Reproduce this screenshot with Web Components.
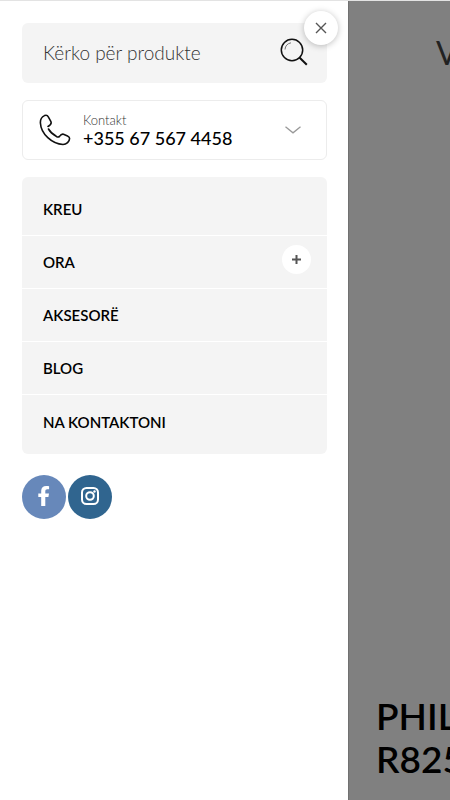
<!DOCTYPE html>
<html lang="sq">
<head>
<meta charset="utf-8">
<meta name="viewport" content="width=device-width, initial-scale=1">
<title>Menu</title>
<style>
  body {
    margin: 0;
    font-family: Lato, "Liberation Sans", sans-serif;
    color: #000;
  }
</style>
</head>
<body>
<shop-page>
  <side-drawer slot="drawer">
    <search-box placeholder="Kërko për produkte"></search-box>
    <contact-card label="Kontakt">+355 67 567 4458</contact-card>
    <nav-menu>
      <nav-item href="#kreu">KREU</nav-item>
      <nav-item href="#ora" expandable>ORA</nav-item>
      <nav-item href="#aksesore">AKSESORË</nav-item>
      <nav-item href="#blog">BLOG</nav-item>
      <nav-item href="#kontakt">NA KONTAKTONI</nav-item>
    </nav-menu>
    <social-links></social-links>
  </side-drawer>
  <product-hero>
    <span slot="brand">V</span>
    <span slot="title">PHIL<br>R825</span>
  </product-hero>
</shop-page>

<script>
class BaseElement extends HTMLElement {
  constructor() {
    super();
    this.attachShadow({ mode: "open" });
  }

  connectedCallback() {
    this.shadowRoot.innerHTML = this.template();
  }
}

class ShopPage extends BaseElement {
  template() {
    return `
      <style>
        :host {
          display: flex;
          box-sizing: border-box;
          min-height: 100vh;
          border-top: 1px solid #e3e3e3;
          overflow: hidden;
        }
      </style>
      <slot name="drawer"></slot>
      <slot></slot>`;
  }
}

class SideDrawer extends BaseElement {
  template() {
    return `
      <style>
        :host {
          display: block;
          position: relative;
          box-sizing: border-box;
          flex: none;
          width: min(348px, 85vw);
          padding: 22px 21px 22px 22px;
          background: #fff;
        }
        .content {
          display: flex;
          flex-direction: column;
          gap: 17px;
        }
        .close {
          position: absolute;
          top: 10px;
          right: 10px;
          display: grid;
          place-items: center;
          width: 34px;
          height: 34px;
          padding: 0;
          border: 0;
          border-radius: 50%;
          background: #fff;
          box-shadow: 0 1px 6px rgba(0, 0, 0, 0.25);
          cursor: pointer;
        }
      </style>
      <div class="content"><slot></slot></div>
      <button class="close" type="button" aria-label="Mbyll">
        <svg width="12" height="12" viewBox="0 0 12 12" fill="none" stroke="#555" stroke-width="1.4">
          <path d="M1 1l10 10M11 1L1 11"/>
        </svg>
      </button>`;
  }
}

class SearchBox extends BaseElement {
  template() {
    const placeholder = this.getAttribute("placeholder");
    return `
      <style>
        :host {
          display: block;
        }
        form {
          display: flex;
          align-items: center;
          height: 60px;
          padding: 0 19px 2px 21px;
          box-sizing: border-box;
          border-radius: 6px;
          background: #f4f4f4;
        }
        input {
          flex: 1;
          min-width: 0;
          padding: 2px 0 0;
          border: 0;
          outline: 0;
          background: none;
          font: 300 19px/24px Lato, sans-serif;
          color: #000;
        }
        input::placeholder {
          color: #333;
          opacity: 1;
        }
        button {
          display: flex;
          padding: 0;
          border: 0;
          background: none;
          cursor: pointer;
        }
      </style>
      <form>
        <input type="search" placeholder="${placeholder}" aria-label="${placeholder}">
        <button type="button" aria-label="Kërko">
          <svg width="28" height="28" viewBox="0 0 28 28" fill="none" stroke="#111">
            <circle cx="12" cy="12" r="10.7" stroke-width="1.5"/>
            <path d="M5 11.5A7.5 7.5 0 0 1 11 4.8" stroke="#777"/>
            <path d="M19.2 19.2l7.6 7.6" stroke-width="2"/>
          </svg>
        </button>
      </form>`;
  }
}

class ContactCard extends BaseElement {
  template() {
    return `
      <style>
        :host {
          display: block;
        }
        button {
          display: flex;
          align-items: center;
          gap: 12px;
          box-sizing: border-box;
          width: 100%;
          height: 60px;
          padding: 0 25px 0 16px;
          border: 1px solid #ececec;
          border-radius: 6px;
          background: #fff;
          font-family: inherit;
          color: #000;
          text-align: left;
          cursor: pointer;
        }
        .text {
          flex: 1;
        }
        .label, .number {
          display: block;
        }
        .label {
          font-size: 13px;
          font-weight: 300;
          line-height: 16px;
          color: #333;
        }
        .number {
          font-size: 18px;
          font-weight: 500;
          line-height: 20px;
        }
      </style>
      <button type="button">
        <svg width="32" height="32" viewBox="0 0 32 32" fill="none" stroke="#111" stroke-width="1.6" stroke-linecap="round" stroke-linejoin="round">
          <path d="M9 12.500C12 11 12.800 9.500 11.800 7.300L9.300 2.800C8.500 1.300 7 1 5.500 1.600C2.500 3 1.200 5.500 1.400 9C2 20 13 30 24 30.500C27.500 30.500 30.500 27.500 30.600 24.500C30.600 23.200 29.800 22.600 28.500 22L24.500 20.300C22.500 19.600 21.500 21 20.500 22.400C19.500 23.500 18.500 23.200 17.200 22.300C13.500 20 11 17.800 9.500 15"/>
        </svg>
        <span class="text">
          <span class="label">${this.getAttribute("label")}</span>
          <span class="number"><slot></slot></span>
        </span>
        <svg width="16" height="8" viewBox="0 0 16 8" fill="none" stroke="#999" stroke-width="1.3">
          <path d="M.5.7L8 6.800L15.500.7"/>
        </svg>
      </button>`;
  }
}

class NavMenu extends BaseElement {
  template() {
    return `
      <style>
        :host {
          display: block;
          padding: 6px 0;
          border-radius: 6px;
          background: #f4f4f4;
        }
        ::slotted(:not(:last-child)) {
          border-bottom: 1px solid #fff;
        }
      </style>
      <nav><slot></slot></nav>`;
  }
}

class NavItem extends BaseElement {
  template() {
    const toggle = this.hasAttribute("expandable")
      ? `<button type="button" aria-label="Hap">
          <svg width="9" height="9" viewBox="0 0 9 9" stroke="#555" stroke-width="2">
            <path d="M4.500 0v9M0 4.500h9"/>
          </svg>
        </button>`
      : "";
    return `
      <style>
        :host {
          display: flex;
          align-items: center;
          box-sizing: border-box;
          height: 53px;
          padding: 0 16px 0 21px;
        }
        a {
          flex: 1;
          font-size: 15px;
          font-weight: 600;
          line-height: 20px;
          color: inherit;
          text-decoration: none;
        }
        button {
          display: grid;
          place-items: center;
          align-self: flex-start;
          width: 29px;
          height: 29px;
          margin-top: 9px;
          padding: 0;
          border: 0;
          border-radius: 50%;
          background: #fff;
          cursor: pointer;
        }
      </style>
      <a href="${this.getAttribute("href")}"><slot></slot></a>${toggle}`;
  }
}

class SocialLinks extends BaseElement {
  template() {
    return `
      <style>
        :host {
          display: flex;
          gap: 2px;
          padding-top: 4px;
        }
        a {
          display: grid;
          place-items: center;
          box-sizing: border-box;
          width: 44px;
          height: 44px;
          padding-bottom: 2px;
          border-radius: 50%;
        }
        .facebook {
          background: #6788ba;
        }
        .instagram {
          background: #30658f;
        }
      </style>
      <a class="facebook" href="#facebook" aria-label="Facebook">
        <svg width="12" height="20" viewBox="0 0 12 20" fill="#fff">
          <path d="M3.200 20V11H.3V7.400h2.900V4.800C3.200 1.700 5.100 0 8.200 0c1.300 0 2.900.2 2.900.2v3.100H9.400c-1.500 0-2.100.9-2.100 1.900v2.200h3.700L10.400 11H7.300v9z"/>
        </svg>
      </a>
      <a class="instagram" href="#instagram" aria-label="Instagram">
        <svg width="18" height="18" viewBox="0 0 18 18" fill="none" stroke="#fff" stroke-width="2">
          <rect x="1" y="1" width="16" height="16" rx="4.500"/>
          <circle cx="9" cy="9" r="3.800"/>
          <circle cx="13.500" cy="4.500" r="1.200" fill="#fff" stroke="none"/>
        </svg>
      </a>`;
  }
}

class ProductHero extends BaseElement {
  template() {
    return `
      <style>
        :host {
          display: flex;
          flex-direction: column;
          justify-content: space-between;
          flex: 1;
          min-width: 0;
          box-sizing: border-box;
          padding: 32px 0 20px 27px;
          border-left: 1px solid #717171;
          background: #808080;
          overflow: hidden;
          white-space: nowrap;
        }
        header {
          padding-left: 60px;
          font-size: 32px;
          line-height: 40px;
          color: #222;
        }
        h1 {
          margin: 0;
          font-size: 37px;
          font-weight: 600;
          line-height: 43px;
        }
      </style>
      <header><slot name="brand"></slot></header>
      <h1><slot name="title"></slot></h1>`;
  }
}

customElements.define("shop-page", ShopPage);
customElements.define("side-drawer", SideDrawer);
customElements.define("search-box", SearchBox);
customElements.define("contact-card", ContactCard);
customElements.define("nav-menu", NavMenu);
customElements.define("nav-item", NavItem);
customElements.define("social-links", SocialLinks);
customElements.define("product-hero", ProductHero);
</script>
</body>
</html>
